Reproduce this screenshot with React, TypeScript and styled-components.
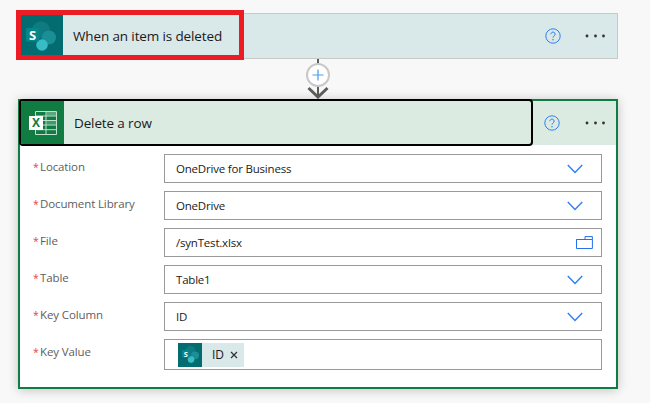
import React from "react";
import styled, { createGlobalStyle } from "styled-components";

const Global = createGlobalStyle`
  html, body { margin: 0; padding: 0; background: #f8f8f8; }
  * { box-sizing: border-box; }
`;

const Page = styled.div`
  width: 650px;
  height: 403px;
  overflow: hidden;
  padding: 13px 32px 0 18px;
  background: #f8f8f8;
  font-family: "Open Sans", "Noto Sans", sans-serif;
  color: #1b1a19;
`;

const TriggerCard = styled.section`
  position: relative;
  display: flex;
  align-items: center;
  height: 46px;
  border: 1px solid #c8c8c8;
  background: #d9e8e8;
`;

const Highlight = styled.div`
  position: absolute;
  left: -3px;
  top: -4px;
  width: 228px;
  height: 50px;
  border: 5px solid #ed1c24;
`;

const Tile = styled.div<{ $bg: string; $w: number }>`
  flex: none;
  width: ${(p) => p.$w}px;
  height: 100%;
  display: flex;
  align-items: center;
  justify-content: center;
  background: ${(p) => p.$bg};
`;

const Title = styled.div<{ $top: number }>`
  flex: 1;
  margin: ${(p) => p.$top}px 0 0 10px;
  font-size: 13.5px;
  line-height: 20px;
  letter-spacing: -0.13px;
  white-space: nowrap;
`;

const Actions = styled.div<{ $right: number }>`
  flex: none;
  display: flex;
  align-items: center;
  gap: 24px;
  margin-right: ${(p) => p.$right}px;
`;

const Connector = styled.svg`
  display: block;
  width: 600px;
  height: 40px;
`;

const ActionCard = styled.section`
  height: 289.5px;
  border: 2px solid #107c41;
  background: #fff;
  box-shadow: 0 1px 10px rgba(0, 0, 0, 0.22);
`;

const CardHeader = styled.header`
  display: flex;
  align-items: flex-start;
  height: 44px;
  background: #dcebe1;
`;

const FocusTitle = styled.div`
  display: flex;
  align-items: center;
  width: 514px;
  height: 47px;
  margin: -2px 0 0 -1px;
  border: 2px solid #000;
  border-radius: 4px;
  background: #dcebe1;
  overflow: hidden;
`;

const HeaderActions = styled(Actions)`
  margin-left: 11px;
  height: 44px;
  gap: 25px;
`;

const FormGrid = styled.div`
  display: grid;
  grid-template-columns: 131px 1fr;
  row-gap: 8px;
  padding: 9px 14px 0 13px;
`;

const Label = styled.label`
  display: block;
  padding-top: 4px;
  font-size: 11.5px;
  line-height: 18px;
  letter-spacing: -0.12px;
  color: #605e5c;
  white-space: nowrap;
`;

const Star = styled.span`
  display: inline-block;
  width: 7px;
  font-size: 10.5px;
  color: #e8404f;
`;

const Field = styled.div<{ $tall?: boolean }>`
  display: flex;
  align-items: center;
  justify-content: space-between;
  height: ${(p) => (p.$tall ? 31 : 29)}px;
  padding: ${(p) => (p.$tall ? "0 0 0 13px" : "0 8px 0 11px")};
  border: 1px solid #999;
  background: #fff;
  font-size: 11.5px;
  letter-spacing: -0.2px;
  color: #1b1a19;
  white-space: nowrap;
`;

const Chip = styled.div`
  display: flex;
  align-items: center;
  width: 66px;
  height: 24px;
  background: #d9e8e8;
  font-size: 12px;
`;

const ChipTile = styled.div`
  width: 24px;
  height: 24px;
  display: flex;
  align-items: center;
  justify-content: center;
  background: #036c70;
`;

const ChipText = styled.span`
  margin-left: 10px;
`;

const ChipClose = styled.svg`
  width: 8px;
  height: 8px;
  margin-left: 6px;
`;

const ChevronSvg = styled.svg`
  width: 16px;
  height: 10px;
  margin-right: 10px;
`;

const HelpIcon = () => (
  <svg width="16" height="16" viewBox="0 0 16 16" fill="none">
    <circle cx="8" cy="8" r="7.2" stroke="#2f7ff5" strokeWidth="1" />
    <path d="M5.9 6.2a2.1 2.1 0 1 1 3.3 1.7c-.8.5-1.2.9-1.2 1.8" stroke="#2f7ff5" strokeWidth="1" />
    <circle cx="8" cy="11.8" r=".75" fill="#2f7ff5" />
  </svg>
);

const MoreIcon = () => (
  <svg width="20" height="4" viewBox="0 0 20 4">
    <circle cx="2" cy="2" r="1.4" fill="#323130" />
    <circle cx="10.5" cy="2" r="1.4" fill="#323130" />
    <circle cx="18.5" cy="2" r="1.4" fill="#323130" />
  </svg>
);

const Chevron = () => (
  <ChevronSvg viewBox="0 0 16 10" fill="none">
    <path d="M.8 1 8 8.6 15.2 1" stroke="#2f7ff5" strokeWidth="1.4" />
  </ChevronSvg>
);

const Folder = () => (
  <svg width="17" height="13" viewBox="0 0 17 13" fill="none">
    <path d="M.5 3.5h15.9v9H.5zM.5 3.5 9 3.5 9 .6h7.4v3" stroke="#2370f0" strokeWidth="1" />
  </svg>
);

const SharePointLogo = ({ size }: { size: number }) => (
  <svg width={size} height={size} viewBox="0 0 30 30">
    <circle cx="15" cy="9" r="8.8" fill="#0f7a7f" />
    <circle cx="23" cy="16.5" r="7" fill="#1a9096" />
    <circle cx="16" cy="24" r="5.8" fill="#37bcc6" />
    <rect x="0" y="7" width="13" height="13.5" rx="1" fill="#04868b" />
    <text x="6.5" y="18.6" textAnchor="middle" fontSize="13" fontWeight="700" fontFamily="'Open Sans', sans-serif" fill="#fff">
      S
    </text>
  </svg>
);

const ExcelLogo = () => (
  <svg width="28" height="24" viewBox="0 0 28 24" fill="none">
    <rect x="17.5" y="1" width="9.5" height="3.6" fill="#5aa67f" />
    <rect x="17.5" y="10" width="9.5" height="3.6" fill="#3f9a6b" />
    <path
      d="M6.5.5h21v23h-21zM17 .5v23M6.5 5h21M6.5 9.5h21M6.5 14h21M6.5 18.7h21"
      stroke="#bfe0cf"
      strokeWidth="1"
    />
    <rect x="0" y="5" width="14" height="14" fill="#fff" />
    <text x="7" y="16.4" textAnchor="middle" fontSize="12" fontWeight="700" fontFamily="'Open Sans', sans-serif" fill="#107c41">
      X
    </text>
  </svg>
);

const fields = [
  { label: "Location", value: "OneDrive for Business", icon: <Chevron /> },
  { label: "Document Library", value: "OneDrive", icon: <Chevron /> },
  { label: "File", value: "/synTest.xlsx", icon: <Folder /> },
  { label: "Table", value: "Table1", icon: <Chevron /> },
  { label: "Key Column", value: "ID", icon: <Chevron /> },
];

const Req = ({ children }: { children: React.ReactNode }) => (
  <Label>
    <Star>*</Star>
    {children}
  </Label>
);

export default function App() {
  return (
    <Page>
      <Global />
      <TriggerCard>
        <Tile $bg="#036c70" $w={44}>
          <SharePointLogo size={30} />
        </Tile>
        <Title $top={-1}>When an item is deleted</Title>
        <Actions $right={12}>
          <HelpIcon />
          <MoreIcon />
        </Actions>
        <Highlight />
      </TriggerCard>
      <Connector viewBox="0 0 600 40" fill="none">
        <path d="M300 0v6" stroke="#5c5c5c" strokeWidth="2" />
        <path d="M300 27v12" stroke="#5c5c5c" strokeWidth="2" />
        <circle cx="300" cy="16" r="11" fill="#fff" stroke="#c8c8c8" strokeWidth="2" />
        <path d="M294.5 16h11M300 10.5v11" stroke="#4a9bf0" strokeWidth="1.2" />
        <path d="M290.5 29l9.5 9 9.5-9" stroke="#5c5c5c" strokeWidth="3" />
      </Connector>
      <ActionCard>
        <CardHeader>
          <FocusTitle>
            <Tile $bg="#107c41" $w={43}>
              <ExcelLogo />
            </Tile>
            <Title $top={1}>Delete a row</Title>
          </FocusTitle>
          <HeaderActions $right={0}>
            <HelpIcon />
            <MoreIcon />
          </HeaderActions>
        </CardHeader>
        <FormGrid>
          {fields.map((f) => (
            <React.Fragment key={f.label}>
              <Req>{f.label}</Req>
              <Field>
                <span>{f.value}</span>
                {f.icon}
              </Field>
            </React.Fragment>
          ))}
          <Req>Key Value</Req>
          <Field $tall>
            <Chip>
              <ChipTile>
                <SharePointLogo size={17} />
              </ChipTile>
              <ChipText>ID</ChipText>
              <ChipClose viewBox="0 0 8 8" fill="none">
                <path d="M1 1l6 6M7 1L1 7" stroke="#323130" strokeWidth="1.2" />
              </ChipClose>
            </Chip>
          </Field>
        </FormGrid>
      </ActionCard>
    </Page>
  );
}
